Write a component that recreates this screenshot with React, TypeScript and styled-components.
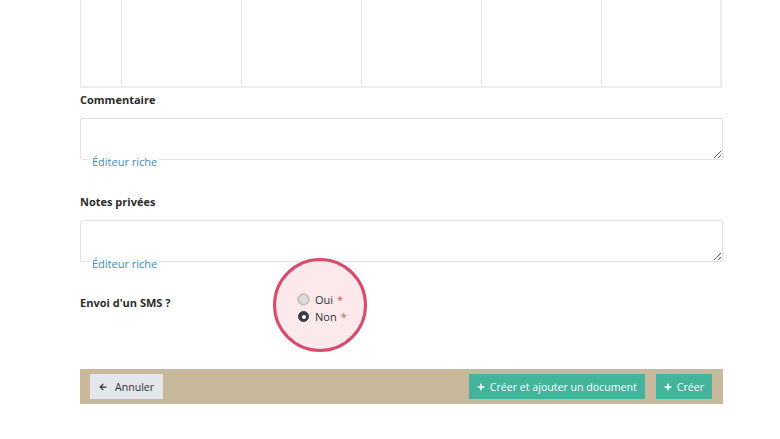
import React from "react";
import styled, { createGlobalStyle } from "styled-components";
import { FaArrowLeft, FaPlus } from "react-icons/fa";

const Global = createGlobalStyle`
  html, body { margin: 0; padding: 0; background: #fff; }
  body { font-family: "Open Sans", "Liberation Sans", sans-serif; color: #333; }
  * { box-sizing: border-box; }
`;

const Page = styled.div`
  width: 643px;
  margin-left: 80px;
  display: flex;
  flex-direction: column;
`;

const Table = styled.div`
  display: grid;
  grid-template-columns: 41px repeat(5, 120px) 1fr;
  height: 88px;
  border-left: 1px solid #e6e6e6;
  border-bottom: 2px solid #ececec;
`;

const Cell = styled.div`
  border-right: 1px solid #e6e6e6;
  &:last-child { border-right: 2px solid #ececec; }
`;

const Label = styled.div<{ $mt: number }>`
  margin-top: ${(p) => p.$mt}px;
  font-size: 11px;
  font-weight: 700;
  line-height: 16px;
  color: #2b2b2b;
`;

const TextArea = styled.textarea`
  margin-top: 10px;
  display: block;
  width: 643px;
  height: 42px;
  border: 1px solid #e2e2e2;
  border-radius: 2px;
  resize: vertical;
  font-family: inherit;
  background: #fff;
  outline: none;
`;

const RichLink = styled.a`
  align-self: flex-start;
  margin: -5px 0 0 10px;
  padding: 0 2px;
  background: #fff;
  font-size: 11px;
  line-height: 14px;
  color: #3b8cbf;
  text-decoration: none;
  position: relative;
`;

const SmsRow = styled.div`
  display: flex;
  align-items: flex-start;
  margin-top: 20px;
`;

const SmsLabel = styled.div`
  width: 218px;
  padding-top: 4px;
  font-size: 11px;
  font-weight: 700;
  line-height: 16px;
  color: #2b2b2b;
`;

const RadioGroup = styled.div`
  position: relative;
  display: flex;
  flex-direction: column;
`;

const Highlight = styled.div`
  position: absolute;
  left: -25px;
  top: -33px;
  width: 94px;
  height: 94px;
  border-radius: 50%;
  border: 3px solid #dc4a6b;
  background: #fbe9ec;
`;

const RadioLine = styled.label`
  position: relative;
  display: flex;
  align-items: center;
  gap: 6px;
  height: 17px;
  font-size: 11px;
  color: #333;
`;

const RadioDot = styled.span<{ $checked?: boolean }>`
  width: 11px;
  height: 11px;
  border-radius: 50%;
  display: inline-flex;
  align-items: center;
  justify-content: center;
  ${(p) =>
    p.$checked
      ? `background: #383d49; border: 1px solid #383d49;`
      : `background: #dcdcdc; border: 1.5px solid #b3b3b3; box-shadow: 0 0 0 1px #e2cfd4;`}
  &::after {
    content: "";
    width: 4px;
    height: 4px;
    border-radius: 50%;
    background: ${(p) => (p.$checked ? "#fff" : "transparent")};
  }
`;

const Required = styled.span`
  color: #e0535e;
  margin-left: -2px;
`;

const Footer = styled.div`
  margin-top: 44px;
  height: 35px;
  background: #c9b99c;
  display: flex;
  align-items: center;
  padding: 0 11px 0 10px;
  gap: 11px;
`;

const Button = styled.button<{ $variant: "default" | "primary" }>`
  height: 25px;
  display: inline-flex;
  align-items: center;
  gap: ${(p) => (p.$variant === "primary" ? "5px" : "8px")};
  border: none;
  border-radius: 0;
  padding: 0 ${(p) => (p.$variant === "primary" ? "8px" : "9px")};
  font-family: inherit;
  font-size: 10.6px;
  background: ${(p) => (p.$variant === "primary" ? "#43b39c" : "#e3e6eb")};
  color: ${(p) => (p.$variant === "primary" ? "#fff" : "#333")};
  svg { width: 8px; height: 8px; }
`;

const Spacer = styled.div`
  flex: 1;
`;

export default function App() {
  return (
    <>
      <Global />
      <Page>
        <Table>
          {Array.from({ length: 6 }).map((_, i) => (
            <Cell key={i} />
          ))}
        </Table>

        <Label $mt={4}>Commentaire</Label>
        <TextArea />
        <RichLink href="#">Éditeur riche</RichLink>

        <Label $mt={25}>Notes privées</Label>
        <TextArea />
        <RichLink href="#">Éditeur riche</RichLink>

        <SmsRow>
          <SmsLabel>Envoi d'un SMS ?</SmsLabel>
          <RadioGroup>
            <Highlight />
            <RadioLine>
              <RadioDot />
              Oui <Required>*</Required>
            </RadioLine>
            <RadioLine>
              <RadioDot $checked />
              Non <Required>*</Required>
            </RadioLine>
          </RadioGroup>
        </SmsRow>

        <Footer>
          <Button $variant="default">
            <FaArrowLeft />
            Annuler
          </Button>
          <Spacer />
          <Button $variant="primary">
            <FaPlus />
            Créer et ajouter un document
          </Button>
          <Button $variant="primary">
            <FaPlus />
            Créer
          </Button>
        </Footer>
      </Page>
    </>
  );
}
